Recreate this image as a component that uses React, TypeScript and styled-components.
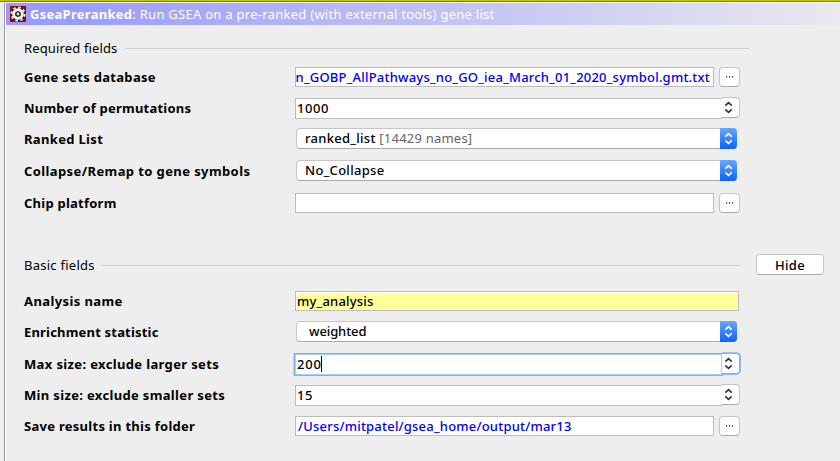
import React from 'react';
import styled, { createGlobalStyle, css } from 'styled-components';

const GlobalStyle = createGlobalStyle`
  * { box-sizing: border-box; }
  body {
    margin: 0;
    background: #eeeeee;
    color: #000;
    font: 500 13px/20px "Noto Sans", "Open Sans", sans-serif;
    overflow: hidden;
  }
`;

const Window = styled.div`
  width: 840px;
  height: 461px;
  display: flex;
  flex-direction: column;
  background: #eeeeee;
  white-space: pre;
`;

const TopEdge = styled.div`
  flex: none;
  height: 2px;
  background: #c4c400;
  border-bottom: 1px solid #77773c;
`;

const Frame = styled.div`
  flex: 1;
  min-height: 0;
  margin-left: 4px;
  border-left: 1px solid #999;
  border-top: 1px solid #fff;
  box-shadow: inset 1px 0 #fff;
  padding-left: 1px;
`;

const TitleBar = styled.header`
  height: 22px;
  display: flex;
  align-items: flex-start;
  padding: 1px 0 0 4px;
  background: linear-gradient(90deg, #9999ff 0%, #9c9cfe 8%, #e9e9ee 100%);
  color: #fff;
  font-weight: 400;
`;

const GearIcon = styled.svg`
  width: 16px;
  height: 16px;
  margin: 2px 4px 0 0;
`;

const Text = styled.span<{ $track?: number }>`
  letter-spacing: ${(p) => p.$track ?? 0}px;
`;

const TitleName = styled(Text)`
  font-weight: 700;
`;

const Section = styled.section`
  width: 800px;
  margin-left: 18px;
`;

const SectionHead = styled.div<{ $top: number; $gap: number }>`
  display: flex;
  align-items: flex-start;
  height: 20px;
  margin-top: ${(p) => p.$top}px;
  margin-bottom: ${(p) => p.$gap}px;
  font-weight: 400;
`;

const Rule = styled.div<{ $width: number }>`
  width: ${(p) => p.$width}px;
  height: 1px;
  margin: 10px 0 0 auto;
  background: #cfcfcf;
`;

const HeadLine = styled.div<{ $width: number }>`
  width: ${(p) => p.$width}px;
  display: flex;
`;

const Row = styled.div<{ $height: number }>`
  display: grid;
  grid-template-columns: 271px 446px;
  align-items: start;
  height: ${(p) => p.$height}px;
`;

const Label = styled.label<{ $track: number }>`
  font-weight: 700;
  letter-spacing: ${(p) => p.$track}px;
`;

const FieldLine = styled.div`
  display: flex;
  gap: 5px;
`;

const TextBox = styled.div<{ $link?: boolean; $end?: boolean }>`
  width: 419px;
  height: 20px;
  border: 1px solid #bdbdbd;
  background: #fff;
  line-height: 18px;
  padding: 0 3px 0 2px;
  display: flex;
  overflow: hidden;
  color: ${(p) => (p.$link ? '#0000f0' : '#000')};
  justify-content: ${(p) => (p.$end ? 'flex-end' : 'flex-start')};
  ${(p) => p.$end && css`padding: 0 3px 0 0;`}
`;

const NameBox = styled(TextBox)`
  width: 444px;
  padding: 0 1px;
  background: #ffff99;
  box-shadow: inset 0 0 0 1px #fff;
`;

const MacButton = styled.button`
  height: 21px;
  padding: 0;
  border: 1px solid #c6c6c6;
  border-bottom-color: #aaa;
  border-radius: 4px;
  background: #fff;
  font: inherit;
  color: #000;
  line-height: 18px;
  text-align: center;
`;

const BrowseButton = styled(MacButton)`
  width: 21px;
  height: 20px;
  display: flex;
  align-items: center;
  justify-content: center;
`;

const HideButton = styled(MacButton)`
  width: 68px;
  margin: -1px 0 0 auto;
  font-weight: 500;
`;

const Combo = styled.div<{ $indent?: number }>`
  display: flex;
  justify-content: space-between;
  width: 441px;
  height: 21px;
  margin: -1px 0 0 1px;
  padding-left: ${(p) => p.$indent ?? 8}px;
  border: 1px solid #c6c6c6;
  border-bottom-color: #aaa;
  border-right: 0;
  border-radius: 4px;
  background: #fff;
  line-height: 18px;
`;

const ComboArrow = styled.div`
  width: 17px;
  height: 21px;
  margin-top: -1px;
  display: flex;
  align-items: center;
  justify-content: center;
  border-radius: 0 4px 4px 0;
  background: linear-gradient(#6aa6fb, #0a65fb);
  color: #fff;
`;

const Muted = styled(Text)`
  color: #666;
  font-weight: 400;
`;

const Spinner = styled.div`
  display: flex;
  align-items: flex-start;
  width: 445px;
  height: 22px;
  margin-top: -1px;
`;

const SpinnerValue = styled.div<{ $focus?: boolean }>`
  width: 427px;
  height: 21px;
  margin-top: 1px;
  padding-left: 1px;
  display: flex;
  align-items: flex-start;
  background: #fff;
  border: 1px solid #bdbdbd;
  border-right: 0;
  line-height: 18px;
  ${(p) => p.$focus && css`
    border-color: #a9cdf5;
    border-right: 1px solid #a9cdf5;
    box-shadow: 0 0 0 1px #7fb2ec, -1px 0 0 1px #b9d5f3;
  `}
`;

const SpinnerArrow = styled.div<{ $focus?: boolean }>`
  width: 18px;
  height: 21px;
  padding-right: 4px;
  display: flex;
  align-items: center;
  justify-content: center;
  background: #fff;
  color: #333;
  border: 1px solid #c4c4c4;
  border-left: 0;
  border-bottom-color: #aaa;
  border-radius: 0 4px 4px 0;
  ${(p) => p.$focus && css`
    border-color: #7fb2ec;
    box-shadow: 1px 0 0 #8dbcf0, 0 -1px 0 #9cc4f1, 0 1px 0 #8dbcf0;
  `}
`;

const Caret = styled.span`
  width: 1px;
  height: 16px;
  margin: 1px 0 0 -1px;
  background: #000;
`;

function Chevrons() {
  return (
    <svg width="9" height="13" viewBox="0 0 9 13" fill="none" stroke="currentColor" strokeWidth="1.6">
      <path d="M1.3 4.6 4.5 1.6 7.7 4.6M1.3 8.4 4.5 11.4 7.7 8.4" />
    </svg>
  );
}

function Browse() {
  return (
    <BrowseButton aria-label="Browse">
      <svg width="9" height="2" viewBox="0 0 9 2" fill="#111">
        <path d="M1 .3h1.2v1.3H1zM4 .3h1.2v1.3H4zM7 .3h1.2v1.3H7z" />
      </svg>
    </BrowseButton>
  );
}

function Gear() {
  return (
    <GearIcon viewBox="0 0 16 16">
      <rect width="16" height="16" fill="#8c0c12" />
      <circle cx="8" cy="8" r="7" fill="#1c1c1c" />
      <circle cx="8" cy="8" r="6.6" fill="none" stroke="#f4f4f4" strokeWidth="2" strokeDasharray="2.6 2.58" />
      <circle cx="8" cy="8" r="4.3" fill="none" stroke="#f4f4f4" strokeWidth="3" />
      <circle cx="8" cy="8" r="2.6" fill="#2a2a2a" />
      <circle cx="8" cy="8" r="1.4" fill="#e4e4e4" />
    </GearIcon>
  );
}

interface FieldProps {
  label: string;
  track: number;
  height: number;
  children: React.ReactNode;
}

function Field({ label, track, height, children }: FieldProps) {
  return (
    <Row $height={height}>
      <Label $track={track}>{label}</Label>
      <FieldLine>{children}</FieldLine>
    </Row>
  );
}

function NumberSpinner({ value, track, focus }: { value: string; track: number; focus?: boolean }) {
  return (
    <Spinner>
      <SpinnerValue $focus={focus}>
        <Text $track={track}>{value}</Text>
        {focus && <Caret />}
      </SpinnerValue>
      <SpinnerArrow $focus={focus}>
        <Chevrons />
      </SpinnerArrow>
    </Spinner>
  );
}

export default function App() {
  return (
    <>
      <GlobalStyle />
      <Window>
        <TopEdge />
        <Frame>
          <TitleBar>
            <Gear />
            <TitleName $track={0.28}>GseaPreranked</TitleName>
            <Text $track={0.27}>: Run GSEA on a pre-ranked (with external tools) gene list</Text>
          </TitleBar>

          <Section>
            <SectionHead $top={13} $gap={9}>
              <HeadLine $width={725}>
                <Text $track={0.14}>Required fields</Text>
                <Rule $width={624} />
              </HeadLine>
            </SectionHead>
            <Field label="Gene sets database" track={0.31} height={31}>
              <TextBox $link $end>
                <Text $track={0.21}>n_GOBP_AllPathways_no_GO_iea_March_01_2020_symbol.gmt.txt</Text>
              </TextBox>
              <Browse />
            </Field>
            <Field label="Number of permutations" track={0.22} height={31}>
              <NumberSpinner value="1000" track={0.55} />
            </Field>
            <Field label="Ranked List" track={0.33} height={32}>
              <Combo>
                <span>
                  <Text $track={0.28}>ranked_list </Text>
                  <Muted $track={0.22}>[14429 names]</Muted>
                </span>
                <ComboArrow><Chevrons /></ComboArrow>
              </Combo>
            </Field>
            <Field label="Collapse/Remap to gene symbols" track={0.4} height={32}>
              <Combo>
                <Text $track={0.3}>No_Collapse</Text>
                <ComboArrow><Chevrons /></ComboArrow>
              </Combo>
            </Field>
            <Field label="Chip platform" track={0.24} height={32}>
              <TextBox />
              <Browse />
            </Field>
          </Section>

          <Section>
            <SectionHead $top={30} $gap={16}>
              <HeadLine $width={717}>
                <Text $track={0.26}>Basic fields</Text>
                <Rule $width={639} />
              </HeadLine>
              <HideButton><Text $track={0.3}>Hide</Text></HideButton>
            </SectionHead>
            <Field label="Analysis name" track={0.4} height={31}>
              <NameBox>
                <Text $track={0.2}>my_analysis</Text>
              </NameBox>
            </Field>
            <Field label="Enrichment statistic" track={0.19} height={32}>
              <Combo $indent={12}>
                <Text $track={-0.1}>weighted</Text>
                <ComboArrow><Chevrons /></ComboArrow>
              </Combo>
            </Field>
            <Field label="Max size: exclude larger sets" track={0.36} height={31}>
              <NumberSpinner value="200" track={0.8} focus />
            </Field>
            <Field label="Min size: exclude smaller sets" track={0.34} height={31}>
              <NumberSpinner value="15" track={0.6} />
            </Field>
            <Field label="Save results in this folder" track={0.28} height={31}>
              <TextBox $link>
                <Text $track={0.21}>/Users/mitpatel/gsea_home/output/mar13</Text>
              </TextBox>
              <Browse />
            </Field>
          </Section>
        </Frame>
      </Window>
    </>
  );
}
